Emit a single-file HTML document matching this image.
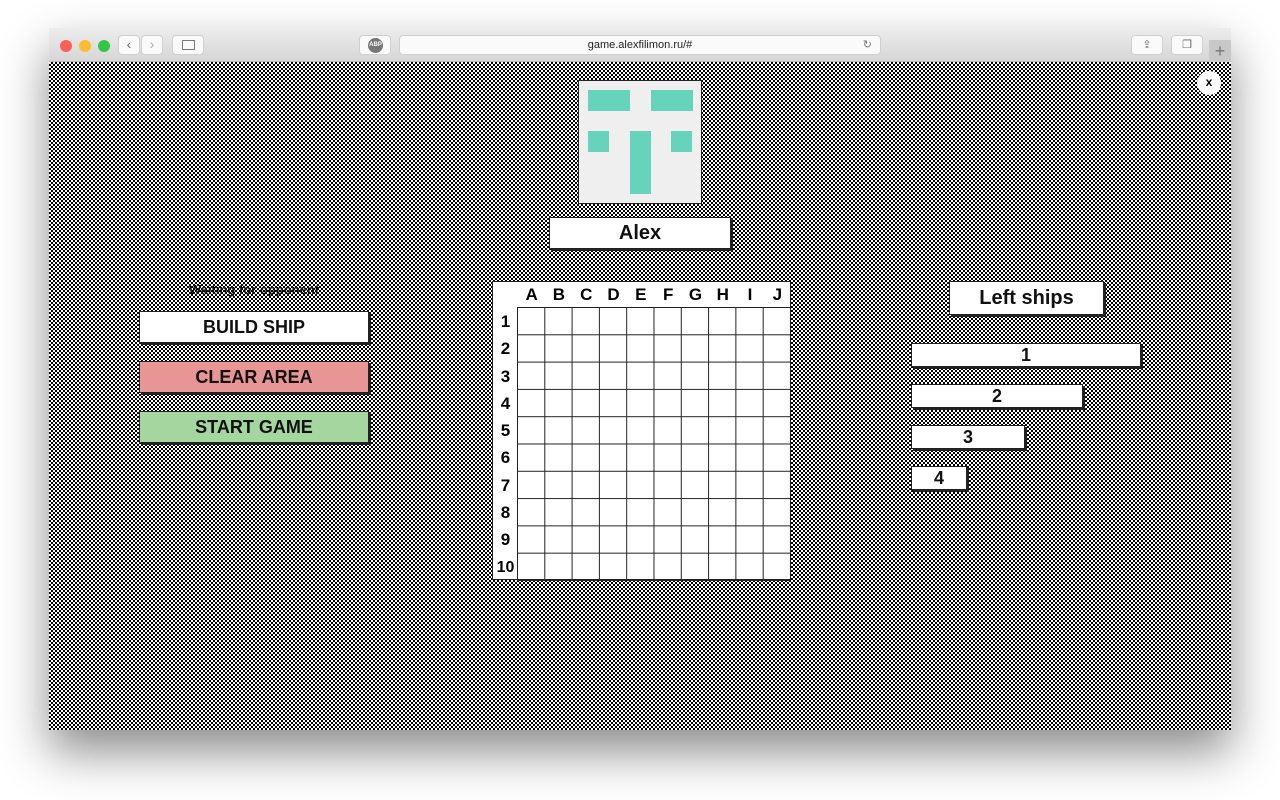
<!DOCTYPE html>
<html><head><meta charset="utf-8"><style>
*{margin:0;padding:0;box-sizing:border-box}
body{width:1280px;height:800px;background:#fff;position:relative;overflow:hidden;font-family:"Liberation Sans",sans-serif}
.win{position:absolute;left:49px;top:28px;width:1182px;height:702px;box-shadow:0 22px 45px rgba(0,0,0,.45);background:#ddd}
.bar{position:absolute;left:0;top:0;width:1182px;height:34px;background:linear-gradient(#ededed,#d6d6d6);border-bottom:1px solid #b8b8b8}
.content{position:absolute;left:0;top:34px;width:1182px;height:668px;background-color:#fff;background-image:repeating-conic-gradient(#000 0 25%,#fff 0 50%);background-size:4px 4px}
.dot{position:absolute;top:12px;width:12px;height:12px;border-radius:50%}
.tb{position:absolute;top:7px;height:20px;background:#fafafa;border-radius:4px;border:1px solid #d0d0d0}
.abs{position:absolute}
.btn{position:absolute;border:1px solid #222;box-shadow:2px 2px 0 #222;display:flex;align-items:center;justify-content:center;font-weight:bold;color:#111}
</style></head><body>
<div class="win">
 <div class="bar">
  <div class="dot" style="left:11px;background:#fc5f57"></div>
  <div class="dot" style="left:30px;background:#fdbc2e"></div>
  <div class="dot" style="left:49px;background:#33c748"></div>
  <div class="tb" style="left:69px;width:22px;font-size:14px;color:#666;text-align:center;line-height:17px">‹</div>
  <div class="tb" style="left:92px;width:22px;font-size:14px;color:#aaa;text-align:center;line-height:17px">›</div>
  <div class="tb" style="left:123px;width:32px"><div class="abs" style="left:9px;top:4px;width:13px;height:10px;border:1px solid #777"></div></div>
  <div class="tb" style="left:310px;width:32px"><div class="abs" style="left:8px;top:2px;width:15px;height:15px;border-radius:50%;background:#777;color:#fff;font-size:6px;text-align:center;line-height:15px;font-weight:bold">ABP</div></div>
  <div class="tb" style="left:350px;width:482px;text-align:center;font-size:11px;line-height:18px;color:#222">game.alexfilimon.ru/#<span style="position:absolute;right:8px;color:#777">↻</span></div>
  <div class="tb" style="left:1082px;width:32px;text-align:center;font-size:11px;color:#666;line-height:18px">⇪</div>
  <div class="tb" style="left:1122px;width:32px;text-align:center;font-size:11px;color:#666;line-height:18px">❐</div>
  <div class="abs" style="left:1160px;top:12px;width:22px;height:22px;background:#c8c8c8;color:#777;text-align:center;font-size:18px;line-height:22px">+</div>
 </div>
 <div class="content">
  <div class="abs" style="left:1148px;top:9px;width:24px;height:24px;border-radius:50%;background:#fff;font-weight:bold;font-size:12px;text-align:center;line-height:23px">x</div>
  <div class="abs" style="left:529px;top:18px;width:124px;height:124px;background:#efefef;border:1px solid #222">
   <div class="abs" style="left:9px;top:9px;width:42px;height:21px;background:#66d4bb"></div>
   <div class="abs" style="left:72px;top:9px;width:42px;height:21px;background:#66d4bb"></div>
   <div class="abs" style="left:9px;top:50px;width:21px;height:21px;background:#66d4bb"></div>
   <div class="abs" style="left:51px;top:50px;width:21px;height:63px;background:#66d4bb"></div>
   <div class="abs" style="left:92px;top:50px;width:21px;height:21px;background:#66d4bb"></div>
  </div>
  <div class="btn" style="left:500px;top:155px;width:182px;height:32px;background:#fff;font-size:20px">Alex</div>
  <div class="abs" style="left:90px;top:220px;width:230px;text-align:center;font-size:13px;font-weight:bold;color:#111">Waiting for opponent</div>
  <div class="btn" style="left:90px;top:249px;width:230px;height:32px;background:#fff;font-size:18px">BUILD SHIP</div>
  <div class="btn" style="left:90px;top:299px;width:230px;height:32px;background:#e89595;font-size:18px">CLEAR AREA</div>
  <div class="btn" style="left:90px;top:349px;width:230px;height:32px;background:#a5d6a0;font-size:18px">START GAME</div>
  <div class="abs" style="left:443px;top:219px;width:299px;height:299px;background:#fff;border:1px solid #222">
   <div class="abs" style="left:25px;top:0;width:273px;height:26px;display:flex;font-weight:bold;font-size:17px;line-height:26px;text-align:center">
    <div style="flex:1">A</div><div style="flex:1">B</div><div style="flex:1">C</div><div style="flex:1">D</div><div style="flex:1">E</div><div style="flex:1">F</div><div style="flex:1">G</div><div style="flex:1">H</div><div style="flex:1">I</div><div style="flex:1">J</div>
   </div>
   <div class="abs" style="left:0;top:26px;width:25px;height:273px;display:flex;flex-direction:column;font-weight:bold;font-size:17px;text-align:center">
    <div style="flex:1;line-height:27px">1</div><div style="flex:1;line-height:27px">2</div><div style="flex:1;line-height:27px">3</div><div style="flex:1;line-height:27px">4</div><div style="flex:1;line-height:27px">5</div><div style="flex:1;line-height:27px">6</div><div style="flex:1;line-height:27px">7</div><div style="flex:1;line-height:27px">8</div><div style="flex:1;line-height:27px">9</div><div style="flex:1;line-height:27px;font-size:16px">10</div>
   </div>
   <div class="abs" style="left:24px;top:25px;width:274px;height:274px;border:1px solid #222;background-image:linear-gradient(90deg,#222 1px,transparent 1px),linear-gradient(#222 1px,transparent 1px);background-size:27.3px 27.3px;background-position:-1px -1px"></div>
  </div>
  <div class="btn" style="left:900px;top:219px;width:155px;height:34px;background:#fff;font-size:20px">Left ships</div>
  <div class="btn" style="left:862px;top:281px;width:230px;height:24px;background:#fff;font-size:18px">1</div>
  <div class="btn" style="left:862px;top:322px;width:172px;height:24px;background:#fff;font-size:18px">2</div>
  <div class="btn" style="left:862px;top:363px;width:114px;height:24px;background:#fff;font-size:18px">3</div>
  <div class="btn" style="left:862px;top:404px;width:56px;height:24px;background:#fff;font-size:18px">4</div>
 </div>
</div>
</body></html>
